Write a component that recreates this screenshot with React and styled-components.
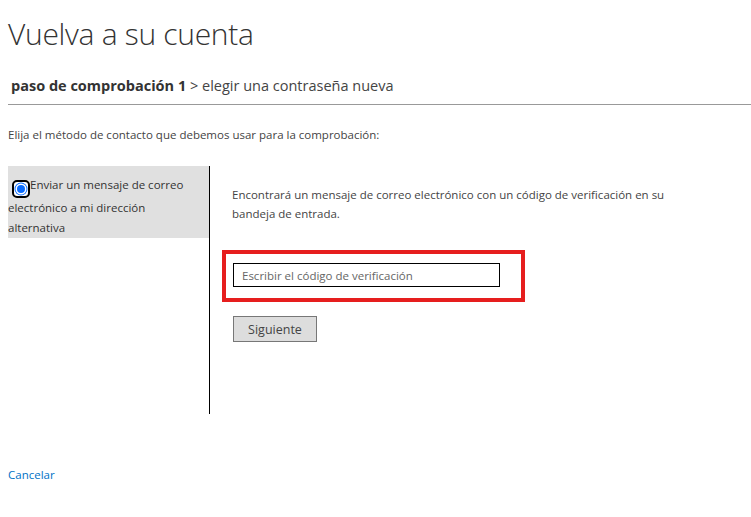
import React from 'react';
import styled, { createGlobalStyle } from 'styled-components';

const GlobalStyle = createGlobalStyle`
  html, body {
    margin: 0;
    padding: 0;
    background: #fff;
  }
  body {
    font-family: "Open Sans", "Noto Sans", "Liberation Sans", sans-serif;
    color: #333;
  }
`;

const Page = styled.div`
  width: 751px;
  min-height: 517px;
  padding-left: 8px;
  box-sizing: border-box;
`;

const Title = styled.h1`
  margin: 0;
  padding-top: 14px;
  font-size: 30px;
  font-weight: 300;
  line-height: 40px;
  color: #333;
  letter-spacing: -0.3px;
`;

const Steps = styled.div`
  margin-top: 22px;
  padding: 0 0 8px 3px;
  border-bottom: 1px solid #999;
  font-size: 14.5px;
  line-height: 20px;
  color: #444;
`;

const CurrentStep = styled.span`
  font-weight: 700;
  color: #333;
`;

const Prompt = styled.p`
  margin: 22px 0 0;
  font-size: 11.5px;
  line-height: 16px;
  color: #444;
`;

const Methods = styled.div`
  display: flex;
  margin-top: 23px;
  height: 248px;
`;

const MethodList = styled.div`
  width: 201px;
  border-right: 1px solid #000;
`;

const MethodOption = styled.label`
  display: block;
  padding: 9px 4px 1px 0;
  background: ${p => (p.$selected ? '#e0e0e0' : 'transparent')};
  font-size: 11.5px;
  line-height: 19.5px;
  color: #333;
  cursor: pointer;
`;

const Radio = styled.span`
  display: inline-flex;
  align-items: center;
  justify-content: center;
  vertical-align: -4px;
  width: 14px;
  height: 14px;
  margin-left: 4px;
  border: 2px solid #000;
  border-radius: 5px;
  background: #fff;

  &::after {
    content: '';
    width: 8px;
    height: 8px;
    border-radius: 50%;
    background: #0a6cff;
    box-shadow: 0 0 0 1.5px #fff, 0 0 0 2.5px #0a6cff;
  }
`;

const MethodDetail = styled.div`
  flex: 1;
  padding: 19px 0 0 22px;
`;

const Info = styled.p`
  margin: 0;
  max-width: 450px;
  font-size: 11.5px;
  line-height: 19px;
  color: #444;
`;

const Highlight = styled.div`
  width: 303px;
  box-sizing: border-box;
  margin: 27px 0 0 -10px;
  padding: 9px 0 11px 7px;
  border: 4px solid #e61e1e;
`;

const CodeInput = styled.input`
  display: block;
  width: 267px;
  height: 24px;
  box-sizing: border-box;
  margin: 0;
  padding: 0 8px;
  border: 1px solid #000;
  font-family: inherit;
  font-size: 11.5px;
  color: #333;
  outline: none;

  &::placeholder {
    color: #666;
  }
`;

const Button = styled.button`
  display: block;
  width: 84px;
  height: 26px;
  margin: 14px 0 0 1px;
  padding: 0;
  border: 1px solid #777;
  background: #ddd;
  font-family: inherit;
  font-size: 12.5px;
  color: #444;
`;

const CancelLink = styled.a`
  display: inline-block;
  margin-top: 53px;
  font-size: 11.5px;
  line-height: 16px;
  color: #0072c6;
  text-decoration: none;
`;

export default function App() {
  return (
    <>
      <GlobalStyle />
      <Page>
        <Title>Vuelva a su cuenta</Title>
        <Steps>
          <CurrentStep>paso de comprobación 1</CurrentStep> &gt; elegir una contraseña nueva
        </Steps>
        <Prompt>Elija el método de contacto que debemos usar para la comprobación:</Prompt>
        <Methods>
          <MethodList>
            <MethodOption $selected>
              <Radio />Enviar un mensaje de correo electrónico a mi dirección alternativa
            </MethodOption>
          </MethodList>
          <MethodDetail>
            <Info>
              Encontrará un mensaje de correo electrónico con un código de verificación en su
              bandeja de entrada.
            </Info>
            <Highlight>
              <CodeInput placeholder="Escribir el código de verificación" />
            </Highlight>
            <Button>Siguiente</Button>
          </MethodDetail>
        </Methods>
        <CancelLink href="#">Cancelar</CancelLink>
      </Page>
    </>
  );
}
